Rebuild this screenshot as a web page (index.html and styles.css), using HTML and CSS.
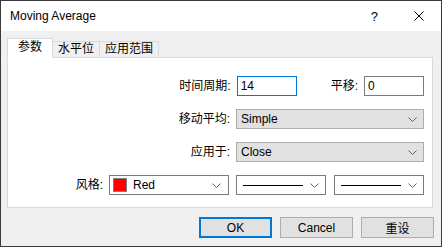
FILE: index.html
```html
<!DOCTYPE html>
<html lang="zh">
<head>
  <meta charset="UTF-8">
  <title>Moving Average</title>
  <link rel="stylesheet" href="styles.css">
</head>
<body>
  <div class="window">
    <div class="titlebar">
      <span class="title">Moving Average</span>
      <span class="help">?</span>
      <svg class="close" width="10" height="10" viewBox="0 0 10 10">
        <path d="M0.5 0.5 L9.5 9.5 M9.5 0.5 L0.5 9.5" stroke="#000" stroke-width="1" fill="none"/>
      </svg>
    </div>

    <div class="client">
      <div class="tabs">
        <div class="tab active">参数</div>
        <div class="tab">水平位</div>
        <div class="tab">应用范围</div>
      </div>

      <div class="panel">
        <div class="row">
          <span class="label">时间周期:</span>
          <div class="edit focused">14</div>
          <span class="label shift">平移:</span>
          <div class="edit">0</div>
        </div>
        <div class="row">
          <span class="label">移动平均:</span>
          <div class="combo wide">
            <span class="value">Simple</span>
            <svg class="chevron" width="9" height="5" viewBox="0 0 9 5"><polyline points="0.5,0.5 4.5,4.5 8.5,0.5" fill="none" stroke="#606060"/></svg>
          </div>
        </div>
        <div class="row">
          <span class="label">应用于:</span>
          <div class="combo wide">
            <span class="value">Close</span>
            <svg class="chevron" width="9" height="5" viewBox="0 0 9 5"><polyline points="0.5,0.5 4.5,4.5 8.5,0.5" fill="none" stroke="#606060"/></svg>
          </div>
        </div>
        <div class="row">
          <span class="label">风格:</span>
          <div class="combo color">
            <span class="swatch"></span>
            <span class="value">Red</span>
            <svg class="chevron" width="9" height="5" viewBox="0 0 9 5"><polyline points="0.5,0.5 4.5,4.5 8.5,0.5" fill="none" stroke="#606060"/></svg>
          </div>
          <div class="combo line first">
            <span class="stroke"></span>
            <svg class="chevron" width="9" height="5" viewBox="0 0 9 5"><polyline points="0.5,0.5 4.5,4.5 8.5,0.5" fill="none" stroke="#606060"/></svg>
          </div>
          <div class="combo line">
            <span class="stroke"></span>
            <svg class="chevron" width="9" height="5" viewBox="0 0 9 5"><polyline points="0.5,0.5 4.5,4.5 8.5,0.5" fill="none" stroke="#606060"/></svg>
          </div>
        </div>
      </div>

      <div class="buttons">
        <button class="default">OK</button>
        <button>Cancel</button>
        <button>重设</button>
      </div>
    </div>
  </div>
</body>
</html>
```

FILE: styles.css
```css
* {
  box-sizing: border-box;
}

body {
  margin: 0;
  font-family: "Liberation Sans", "Noto Sans CJK SC", sans-serif;
  font-size: 12px;
  color: #000000;
}

.window {
  width: 442px;
  height: 247px;
  border: 1px solid #3a3a3a;
  background-color: #f0f0f0;
}

.titlebar {
  display: flex;
  align-items: center;
  height: 30px;
  padding: 0 17px 0 9px;
  background-color: #ffffff;
}

.title {
  font-size: 12px;
}

.help {
  margin-left: auto;
  margin-right: 36px;
  font-size: 13px;
}

.client {
  padding: 7px 7px 0 6px;
}

.tabs {
  display: flex;
  align-items: flex-end;
  height: 20px;
  position: relative;
  z-index: 1;
}

.tab {
  height: 17px;
  line-height: 15px;
  padding: 0 5px;
  border: 1px solid #d9d9d9;
  border-left: none;
  background-color: #f0f0f0;
}

.tab.active {
  height: 20px;
  line-height: 17px;
  padding: 0 10px;
  border-left: 1px solid #d9d9d9;
  border-bottom-color: #ffffff;
  background-color: #ffffff;
}

.panel {
  display: flex;
  flex-direction: column;
  gap: 13px;
  height: 151px;
  margin: -1px 1px 0 0;
  padding: 18px 8px 0 0;
  border: 1px solid #d9d9d9;
  background-color: #ffffff;
}

.row {
  display: flex;
  justify-content: flex-end;
  align-items: center;
  gap: 6px;
  height: 20px;
}

.label {
  line-height: 20px;
}

.label.shift {
  margin-left: 28px;
}

.edit {
  width: 60px;
  height: 20px;
  line-height: 18px;
  padding: 0 3px;
  border: 1px solid #7a7a7a;
  background-color: #ffffff;
}

.edit.focused {
  border-color: #0078d7;
}

.combo {
  display: flex;
  align-items: center;
  height: 20px;
  padding: 0 6px 0 4px;
  border: 1px solid #adadad;
  background-color: #e1e1e1;
}

.combo .value {
  flex: 1;
}

.combo.wide {
  width: 188px;
}

.combo.color,
.combo.line {
  border-color: #7a7a7a;
  background-color: #ffffff;
}

.combo.color {
  width: 120px;
  margin-right: 1px;
  padding-left: 3px;
  padding-right: 7px;
}

.combo.line {
  width: 90px;
  padding-left: 6px;
}

.combo.line.first {
  margin-right: 2px;
}

.swatch {
  width: 14px;
  height: 14px;
  margin-right: 6px;
  border: 1px solid #808080;
  background-color: #ff0000;
}

.stroke {
  width: 60px;
  height: 1px;
  margin-right: auto;
  background-color: #000000;
}

.chevron {
  flex: none;
}

.buttons {
  display: flex;
  justify-content: flex-end;
  gap: 8px;
  padding-top: 9px;
}

button {
  width: 73px;
  height: 21px;
  padding: 0;
  border: 1px solid #adadad;
  background-color: #e1e1e1;
  font-family: "Liberation Sans", "Noto Sans CJK SC", sans-serif;
  font-size: 12px;
  color: #000000;
}

button.default {
  border: 2px solid #0078d7;
}
```
